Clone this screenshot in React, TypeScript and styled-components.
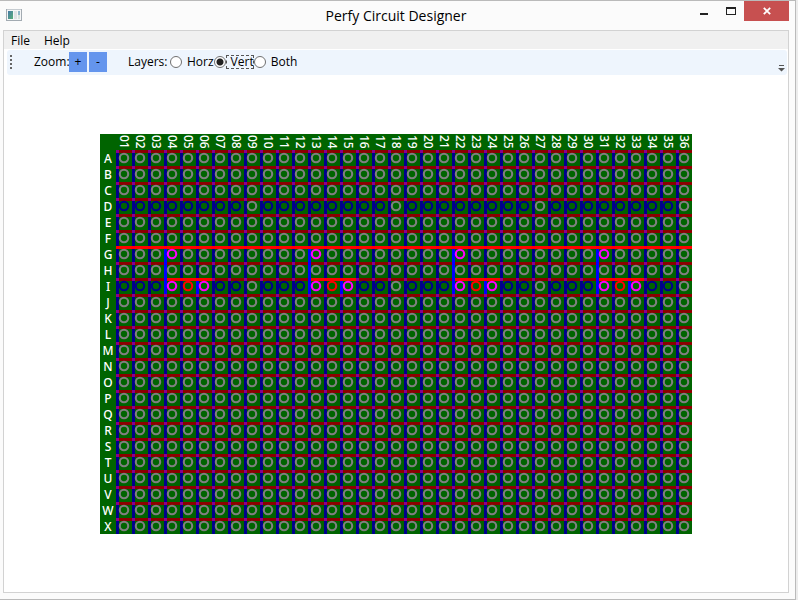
import React, { useState } from "react";
import styled, { createGlobalStyle } from "styled-components";

const CELL = 16;
const COLS = 36;
const ROWS = 24;
const GROUP = 9;

const columns = Array.from({ length: COLS }, (_, i) => String(i + 1).padStart(2, "0"));
const rows = Array.from({ length: ROWS }, (_, i) => String.fromCharCode(65 + i));
const groups = Array.from({ length: COLS / GROUP }, (_, i) => i * GROUP);

const GlobalStyle = createGlobalStyle`
  * { box-sizing: border-box; }
  body { margin: 0; background: #ececec; }
  button, input { font: inherit; }
`;

const Desktop = styled.div`
  min-height: 100vh;
  display: flex;
  padding-right: 2px;
  font: 12px/16px "Open Sans", "Noto Sans", sans-serif;
  color: #000;
`;

const Window = styled.div`
  flex: 1;
  display: flex;
  flex-direction: column;
  background: #fbfbfb;
  border: 1px solid #bababa;
  border-left: 0;
  padding: 0 6px 6px 3px;
`;

const TitleBar = styled.header`
  height: 29px;
  display: grid;
  grid-template-columns: 1fr auto 1fr;
  align-items: start;
`;

const AppIcon = styled.svg`
  margin: 7px 0 0 3px;
`;

const Title = styled.h1`
  margin: 0;
  font: 400 14px/29px "Open Sans", "Noto Sans", sans-serif;
`;

const Controls = styled.div`
  display: flex;
  justify-content: flex-end;
`;

const ControlButton = styled.button<{ $close?: boolean }>`
  width: ${(p) => (p.$close ? 45 : 27)}px;
  height: 20px;
  padding: 0;
  border: 0;
  display: grid;
  place-items: center;
  background: ${(p) => (p.$close ? "#c75050" : "transparent")};
`;

const Client = styled.main`
  flex: 1;
  display: flex;
  flex-direction: column;
  background: #fff;
  border: 1px solid #d2d2d2;
`;

const MenuBar = styled.nav`
  display: flex;
  height: 18px;
  background: #f0f0f0;
`;

const MenuItem = styled.button`
  padding: 1px 7px;
  border: 0;
  background: transparent;
  line-height: 18px;
`;

const ToolBar = styled.div`
  display: flex;
  align-items: center;
  height: 25px;
  margin: 1px 1px 0 3px;
  padding: 0 2px 1px 3px;
  border-radius: 3px;
  background: #eef5fd;
`;

const Grip = styled.div`
  width: 2px;
  height: 14px;
  margin-right: 22px;
  background: repeating-linear-gradient(#666 0 2px, transparent 2px 4px);
`;

const ZoomLabel = styled.span`
  width: 34px;
  white-space: nowrap;
`;

const ZoomButton = styled.button`
  width: 18px;
  height: 20px;
  margin: 0 1px;
  padding: 0;
  border: 0;
  background: #6495ed;
`;

const LayerGroup = styled.fieldset`
  display: flex;
  align-items: center;
  margin: 0 0 0 20px;
  padding: 0;
  border: 0;
`;

const GroupLabel = styled.span`
  width: 42px;
  white-space: nowrap;
`;

const Option = styled.label`
  display: flex;
  align-items: center;
`;

const Radio = styled.input`
  appearance: none;
  width: 12px;
  height: 12px;
  margin: 0;
  border: 1px solid #707070;
  border-radius: 50%;
  background: #fff;
  outline: 0;
  &:checked {
    background: radial-gradient(circle, #212121 0 3px, #fff 4px);
  }
`;

const OptionText = styled.span<{ $focus: boolean }>`
  padding: 0 0 0 5px;
  line-height: 14px;
  outline: ${(p) => (p.$focus ? "1px dashed #555" : "0")};
  outline-offset: -1px;
`;

const Overflow = styled.button`
  align-self: flex-end;
  margin-left: auto;
  padding: 0 0 2px;
  border: 0;
  background: transparent;
  display: flex;
`;

const Workspace = styled.section`
  flex: 1;
  display: flex;
  justify-content: center;
  align-items: flex-start;
  padding: 59px 0 0;
`;

const Board = styled.div`
  display: grid;
  grid-template: "corner head" ${CELL}px "side holes" auto / ${CELL}px auto;
  background: #006400;
  color: #fff;
  font-family: "Noto Sans", "Open Sans", sans-serif;
  font-weight: 500;
`;

const ColumnLabels = styled.div`
  grid-area: head;
  display: grid;
  grid-template-columns: repeat(${COLS}, ${CELL}px);
`;

const ColumnLabel = styled.span`
  height: ${CELL}px;
  writing-mode: vertical-rl;
  line-height: ${CELL}px;
  text-align: center;
`;

const RowLabels = styled.div`
  grid-area: side;
`;

const RowLabel = styled.div`
  height: ${CELL}px;
  line-height: 18px;
  text-align: center;
`;

const Holes = styled.svg`
  grid-area: holes;
  display: block;
`;

function holeColor(row: number, col: number) {
  const k = col % GROUP;
  if (row === 6 && k === 3) return "#ff00ff";
  if (row === 8 && (k === 3 || k === 5)) return "#ff00ff";
  if (row === 8 && k === 4) return "#ff0000";
  if ((row === 3 || row === 8) && k !== 8) return "#00008b";
  return "#808080";
}

function Circuit() {
  const width = COLS * CELL;
  const height = ROWS * CELL;
  return (
    <Holes width={width} height={height} shapeRendering="crispEdges" aria-label="Perfboard">
      {rows.map((r, y) => <rect key={r} y={y * CELL} width={width} height={3} fill="#8b0000" />)}
      {columns.map((c, x) => <rect key={c} x={x * CELL} width={3} height={height} fill="#00008b" />)}
      {rows.map((r, y) => columns.map((c, x) => (
        <rect key={r + c} x={x * CELL} y={y * CELL} width={3} height={3} fill="#8b008b" />
      )))}
      {groups.map((g) => (
        <g key={g}>
          <rect x={(g + 3) * CELL} y={6 * CELL} width={3} height={3 * CELL} fill="#0000ff" />
          <rect x={(g + 5) * CELL} y={8 * CELL} width={3} height={CELL} fill="#0000ff" />
          <rect x={(g + 3) * CELL + 3} y={8 * CELL} width={3 * CELL - 3} height={3} fill="#ff0000" />
        </g>
      ))}
      <rect y={6 * CELL} width={width} height={3} fill="#ff0000" />
      <g fill="none" strokeWidth={2.1} shapeRendering="auto">
        {rows.map((r, y) => columns.map((c, x) => (
          <circle key={r + c} cx={x * CELL + 8} cy={y * CELL + 8} r={4.2} stroke={holeColor(y, x)} />
        )))}
      </g>
    </Holes>
  );
}

export default function App() {
  const [layer, setLayer] = useState("Vert");
  return (
    <Desktop>
      <GlobalStyle />
      <Window>
        <TitleBar>
          <AppIcon width="16" height="14" viewBox="0 0 16 14">
            <defs>
              <linearGradient id="pane" x2="1" y2="1">
                <stop stopColor="#4779a8" /><stop offset="1" stopColor="#58b078" />
              </linearGradient>
            </defs>
            <rect x=".5" y="1.5" width="15" height="11" fill="#f5f6f7" stroke="#a3abb2" />
            <rect x="1" y="1" width="14" height="1" fill="#c5cbd0" />
            <rect x="2" y="3" width="5" height="8" fill="url(#pane)" />
            <rect x="8" y="3" width="3" height="8" fill="#dfe3e5" />
            <rect x="12" y="3" width="2" height="4" fill="#8fb7c8" />
            <rect x="12" y="7" width="2" height="4" fill="#d9e4df" />
          </AppIcon>
          <Title>Perfy Circuit Designer</Title>
          <Controls>
            <ControlButton aria-label="Minimize">
              <svg width="8" height="20"><rect y="12" width="8" height="2" fill="#222" /></svg>
            </ControlButton>
            <ControlButton aria-label="Maximize">
              <svg width="10" height="20" shapeRendering="crispEdges"><path d="M0 6h10v8H0zM1 8v5h8V8z" fill="#222" fillRule="evenodd" /></svg>
            </ControlButton>
            <ControlButton $close aria-label="Close">
              <svg width="8" height="8"><path d="M.8 .8 7.2 7.2M7.2 .8 .8 7.2" stroke="#fff" strokeWidth="1.8" /></svg>
            </ControlButton>
          </Controls>
        </TitleBar>
        <Client>
          <MenuBar>
            <MenuItem>File</MenuItem>
            <MenuItem>Help</MenuItem>
          </MenuBar>
          <ToolBar>
            <Grip />
            <ZoomLabel>Zoom:</ZoomLabel>
            <ZoomButton aria-label="Zoom in">+</ZoomButton>
            <ZoomButton aria-label="Zoom out">-</ZoomButton>
            <LayerGroup>
              <GroupLabel>Layers:</GroupLabel>
              {["Horz", "Vert", "Both"].map((name) => (
                <Option key={name}>
                  <Radio type="radio" name="layer" checked={layer === name} onChange={() => setLayer(name)} />
                  <OptionText $focus={layer === name}>{name}</OptionText>
                </Option>
              ))}
            </LayerGroup>
            <Overflow aria-label="More tools">
              <svg width="7" height="7"><path d="M1 0h5v1H1zM0 3h7L3.500 6.500z" fill="#555" /></svg>
            </Overflow>
          </ToolBar>
          <Workspace>
            <Board>
              <ColumnLabels>{columns.map((c) => <ColumnLabel key={c}>{c}</ColumnLabel>)}</ColumnLabels>
              <RowLabels>{rows.map((r) => <RowLabel key={r}>{r}</RowLabel>)}</RowLabels>
              <Circuit />
            </Board>
          </Workspace>
        </Client>
      </Window>
    </Desktop>
  );
}
